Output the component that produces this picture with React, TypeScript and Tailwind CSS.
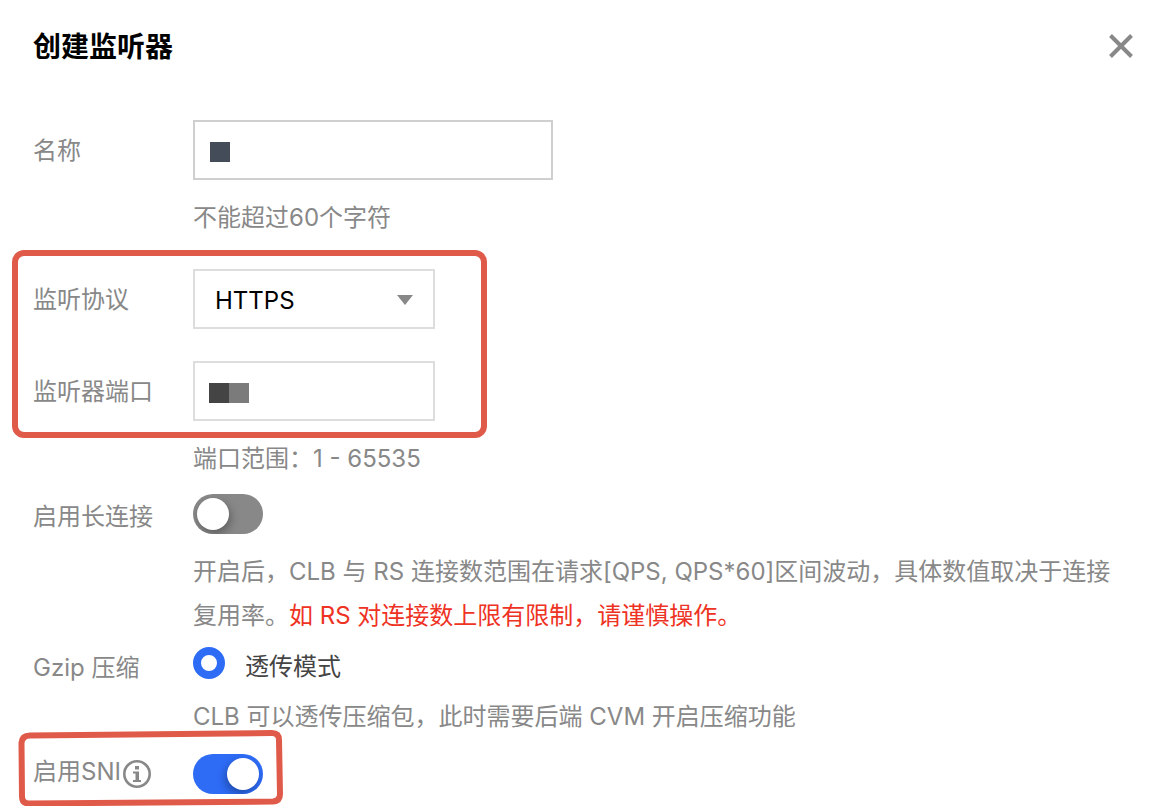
import { useState } from "react";
import type { FC, ReactNode } from "react";

interface RowProps {
  label: ReactNode;
  htmlFor: string;
  labelClass?: string;
  children: ReactNode;
}

const Row: FC<RowProps> = ({ label, htmlFor, labelClass = "leading-[62px]", children }) => {
  return (
    <div className="grid grid-cols-[160px_minmax(0,1fr)] items-start">
      <div className={`-mb-2 flex items-center ${labelClass}`}>
        <label htmlFor={htmlFor}>{label}</label>
        {htmlFor === "sni" && <InfoIcon />}
      </div>
      <div>{children}</div>
    </div>
  );
};

const InfoIcon = () => (
  <svg className="mt-1 ml-0.5 h-7 w-7" viewBox="0 0 28 28" fill="none" aria-hidden="true">
    <circle cx="14" cy="14" r="12.7" stroke="#888" strokeWidth="2.6" />
    <path d="M12 6h4v3.500h-4zM10 11.500h6v8.500h2v2h-8v-2h2.500v-6.500h-2.500z" fill="#888" />
  </svg>
);

interface ToggleProps {
  id: string;
  checked: boolean;
  onChange: (checked: boolean) => void;
}

const Toggle: FC<ToggleProps> = ({ id, checked, onChange }) => {
  return (
    <input
      id={id}
      type="checkbox"
      role="switch"
      checked={checked}
      onChange={(e) => onChange(e.target.checked)}
      className="block h-10 w-[70px] cursor-pointer appearance-none overflow-hidden rounded-full bg-[#888] p-1 before:block before:h-8 before:w-8 before:rounded-full before:bg-white before:shadow-[2px_4px_8px_rgba(0,0,0,0.3)] checked:bg-[#2e6cf6] checked:before:ml-[30px] checked:before:shadow-[-2px_4px_8px_rgba(0,0,0,0.3)]"
    />
  );
};

const App = () => {
  const [keepAlive, setKeepAlive] = useState(false);
  const [sni, setSni] = useState(true);

  return (
    <div
      className="bg-white px-[33px] pb-3 font-[Inter,'Noto_Sans_CJK_SC',sans-serif] text-2xl text-[#888]"
      lang="zh-CN"
    >
      <header className="flex h-[92px] items-center justify-between">
        <h1 className="pt-1 text-[28px] font-bold text-black">创建监听器</h1>
        <button type="button" aria-label="关闭" className="-mr-3 cursor-pointer">
          <svg className="h-6 w-6" viewBox="0 0 24 24" fill="none" stroke="#888" strokeWidth="4">
            <path d="M1.5 1.5l21 21M22.5 1.5l-21 21" />
          </svg>
        </button>
      </header>

      <form className="pt-7">
        <Row label="名称" htmlFor="name">
          <div className="flex h-[60px] max-w-[360px] items-center border-2 border-[#cfcfcf] px-[15px] pt-[3px]">
            <span className="h-5 w-5 bg-[#444b59]" />
            <input id="name" type="text" className="min-w-0 flex-1 text-black outline-none" />
          </div>
          <p className="mt-4 leading-[44px]">不能超过60个字符</p>
        </Row>

        <div className="relative mt-[29px] flex flex-col gap-8">
          <Row label="监听协议" htmlFor="protocol">
            <div className="relative w-[242px]">
              <select
                id="protocol"
                className="block h-[60px] w-full appearance-none border-2 border-[#ddd] px-5 pt-1 text-black"
              >
                <option>HTTPS</option>
              </select>
              <svg className="pointer-events-none absolute top-[26px] right-[22px] h-[10px] w-4" viewBox="0 0 16 10">
                <path d="M0 0h16L8 10z" fill="#888" />
              </svg>
            </div>
          </Row>
          <Row label="监听器端口" htmlFor="port">
            <div className="flex h-[60px] w-[242px] items-center border-2 border-[#ddd] px-[14px] pt-[3px]">
              <span className="h-5 w-5 bg-[#444]" />
              <span className="h-5 w-5 bg-[#7b7b7b]" />
              <input id="port" type="text" className="min-w-0 flex-1 text-black outline-none" />
            </div>
          </Row>
          <div className="pointer-events-none absolute -top-[19px] -bottom-[17px] -left-[21px] w-[475px] rounded-xl border-[6px] border-[#e05a4a]" />
        </div>

        <p className="mt-4 ml-40 leading-[44px]">端口范围：1 - 65535</p>

        <div className="mt-[13px]">
          <Row label="启用长连接" htmlFor="keepalive" labelClass="leading-[46px]">
            <Toggle id="keepalive" checked={keepAlive} onChange={setKeepAlive} />
            <p className="mt-4 leading-[44px]">
              开启后，CLB 与 RS 连接数范围在请求[QPS, QPS*60]区间波动，具体数值取决于连接复用率。
              <span className="text-[#ee3223]">如 RS 对连接数上限有限制，请谨慎操作。</span>
            </p>
          </Row>
        </div>

        <div className="mt-[9px]">
          <Row label="Gzip 压缩" htmlFor="gzip" labelClass="leading-[42px]">
            <div className="flex items-start gap-5">
              <input
                id="gzip"
                type="radio"
                name="gzip"
                defaultChecked
                className="h-8 w-8 appearance-none rounded-full border-8 border-[#2e6cf6] bg-white"
              />
              <label htmlFor="gzip" className="leading-10 text-[#444]">
                透传模式
              </label>
            </div>
            <p className="mt-2 leading-[44px]">CLB 可以透传压缩包，此时需要后端 CVM 开启压缩功能</p>
          </Row>
        </div>

        <div className="relative mt-[15px]">
          <Row label="启用SNI" htmlFor="sni" labelClass="leading-9">
            <Toggle id="sni" checked={sni} onChange={setSni} />
          </Row>
          <svg
            className="pointer-events-none absolute -top-[25px] -left-[15px] h-[77px] w-[266px]"
            viewBox="0 0 266 77"
            fill="none"
          >
            <path
              d="M12 6.500L254 4Q261 4 261 11L262 65Q262 72 255 72.500L11 74.500Q4 74.500 4 67.500L3.500 14Q4 6.500 12 6.500Z"
              stroke="#e05a4a"
              strokeWidth="6"
            />
          </svg>
        </div>
      </form>
    </div>
  );
};

export default App;
